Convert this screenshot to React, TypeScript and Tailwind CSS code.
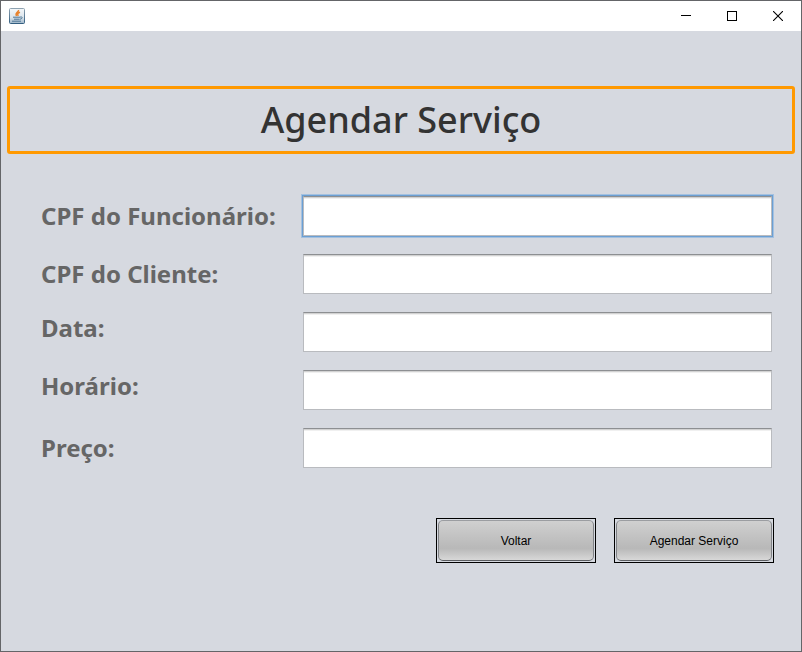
import React from "react";

type Field = { id: string; label: string; align: string };

const fields: Field[] = [
  { id: "cpf-funcionario", label: "CPF do Funcionário:", align: "items-center" },
  { id: "cpf-cliente", label: "CPF do Cliente:", align: "items-center" },
  { id: "data", label: "Data:", align: "items-start" },
  { id: "horario", label: "Horário:", align: "items-start" },
  { id: "preco", label: "Preço:", align: "items-center" },
];

function JavaIcon() {
  return (
    <svg width="16" height="16" viewBox="0 0 16 16" aria-hidden="true">
      <defs>
        <linearGradient id="tile" x1="0" y1="0" x2="0" y2="1">
          <stop offset="0" stopColor="#f4f7f9" />
          <stop offset="0.6" stopColor="#dce5ec" />
          <stop offset="1" stopColor="#9db5c8" />
        </linearGradient>
        <linearGradient id="edge" x1="0" y1="0" x2="0" y2="1">
          <stop offset="0" stopColor="#8ea2b1" />
          <stop offset="1" stopColor="#335e80" />
        </linearGradient>
      </defs>
      <rect x="0.5" y="0.5" width="15" height="15" rx="1" fill="url(#tile)" stroke="url(#edge)" />
      <path d="M9.500 2C10.200 4.200 5.500 4.500 7.500 8M11 4.200C8.500 5 8.300 6 9.200 8" fill="none" stroke="#e8822c" strokeWidth="1.500" />
      <path d="M4 9.200H11M5 11.200H10.500M3 13.200H12M11 9.200C14 8 13.800 11 10.800 11.200" fill="none" stroke="#4d7594" strokeWidth="1" />
    </svg>
  );
}

function TitleBar() {
  const button = "flex h-full w-[46px] items-center justify-center";
  return (
    <header className="flex h-[30px] items-center justify-between bg-white">
      <div className="pl-2">
        <JavaIcon />
      </div>
      <div className="flex h-full">
        <button type="button" aria-label="Minimizar" className={button}>
          <svg width="10" height="10" viewBox="0 0 10 10" stroke="#000">
            <path d="M0 4.500H10" />
          </svg>
        </button>
        <button type="button" aria-label="Maximizar" className={button}>
          <svg width="10" height="10" viewBox="0 0 10 10" stroke="#000" fill="none">
            <rect x="0.5" y="0.5" width="9" height="9" />
          </svg>
        </button>
        <button type="button" aria-label="Fechar" className={button}>
          <svg width="10" height="10" viewBox="0 0 10 10" stroke="#000" strokeWidth="1.100">
            <path d="M0 0L10 10M10 0L0 10" />
          </svg>
        </button>
      </div>
    </header>
  );
}

function FormRow({ id, label, align }: Field) {
  return (
    <div className={`flex ${align}`}>
      <label htmlFor={id} className="w-[262px] shrink-0 text-2xl/8 font-bold text-[#666666]">
        {label}
      </label>
      <input
        id={id}
        type="text"
        autoFocus={id === "cpf-funcionario"}
        className="h-10 min-w-0 flex-1 border border-[#b9bbbf] border-t-[#8d8f92] bg-white px-2 text-base text-black caret-transparent shadow-[inset_0_1px_0_#d2d2d2,inset_0_2px_0_#f0f0f0] outline-none focus:shadow-[inset_0_1px_0_#d2d2d2,inset_0_2px_0_#f0f0f0,0_0_0_1px_#6b9fd3,0_0_0_2px_#a4c1e0]"
      />
    </div>
  );
}

function ActionButton({ children }: { children: React.ReactNode }) {
  return (
    <button type="button" className="h-[45px] w-40 border border-black p-px font-['Liberation_Sans',Arial,sans-serif] text-xs text-black">
      <span className="flex h-full items-center justify-center rounded-[5px] border border-[#808286] border-t-[#9b9da1] border-b-[#5c5e62] bg-linear-to-b from-[#d0d0d0] via-[#b8b8b8] via-70% to-[#d8d8d8]">
        {children}
      </span>
    </button>
  );
}

export default function App() {
  return (
    <div className="flex min-h-screen flex-col border border-[#646568] bg-[#d6d9e0] font-['Noto_Sans',Tahoma,sans-serif]">
      <TitleBar />
      <main className="pt-[55px]">
        <h1 className="mx-[6px] flex h-[68px] items-center justify-center rounded-[3px] border-3 border-[#ff9900] text-4xl font-medium text-[#333333]">
          Agendar Serviço
        </h1>
        <form className="mt-[42px] mr-[29px] ml-10 flex flex-col gap-[18px]">
          {fields.map((field) => (
            <FormRow key={field.id} {...field} />
          ))}
        </form>
        <div className="mt-[50px] mr-[27px] flex justify-end gap-[18px]">
          <ActionButton>Voltar</ActionButton>
          <ActionButton>Agendar Serviço</ActionButton>
        </div>
      </main>
    </div>
  );
}
